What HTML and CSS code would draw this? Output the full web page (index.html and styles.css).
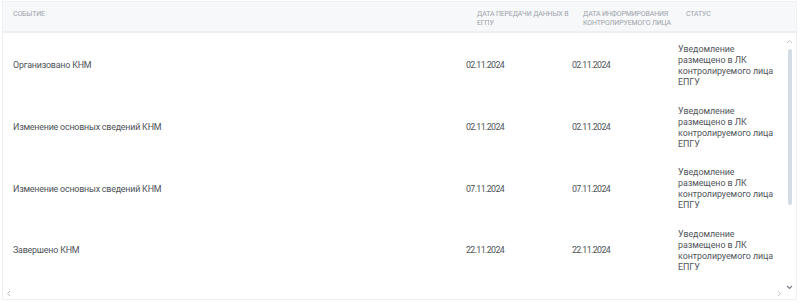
FILE: index.html
```html
<!DOCTYPE html>
<html lang="ru">
<head>
<meta charset="utf-8">
<link rel="stylesheet" href="styles.css">
</head>
<body>
<div class="table">
  <div class="head">
    <div class="hc hc1">Событие</div>
    <div class="hc hc2">Дата передачи данных в ЕГПУ</div>
    <div class="hc hc3">Дата информирования контролируемого лица</div>
    <div class="hc hc4">Статус</div>
  </div>
  <div class="body">
    <div class="rows">
      <div class="row">
        <div class="c c1">Организовано КНМ</div>
        <div class="c c2">02.11.2024</div>
        <div class="c c3">02.11.2024</div>
        <div class="c c4">Уведомление размещено в ЛК контролируемого лица ЕПГУ</div>
      </div>
      <div class="row">
        <div class="c c1">Изменение основных сведений КНМ</div>
        <div class="c c2">02.11.2024</div>
        <div class="c c3">02.11.2024</div>
        <div class="c c4">Уведомление размещено в ЛК контролируемого лица ЕПГУ</div>
      </div>
      <div class="row">
        <div class="c c1">Изменение основных сведений КНМ</div>
        <div class="c c2">07.11.2024</div>
        <div class="c c3">07.11.2024</div>
        <div class="c c4">Уведомление размещено в ЛК контролируемого лица ЕПГУ</div>
      </div>
      <div class="row">
        <div class="c c1">Завершено КНМ</div>
        <div class="c c2">22.11.2024</div>
        <div class="c c3">22.11.2024</div>
        <div class="c c4">Уведомление размещено в ЛК контролируемого лица ЕПГУ</div>
      </div>
    </div>
    <div class="vbar">
      <svg class="arr" width="7" height="5" viewBox="0 0 7 5"><path d="M1 4 L3.5 1.5 L6 4" fill="none" stroke="#c4c8ce" stroke-width="1"/></svg>
      <div class="track"><div class="thumb"></div></div>
      <svg class="arr" width="7" height="5" viewBox="0 0 7 5"><path d="M1 1 L3.5 3.5 L6 1" fill="none" stroke="#7d838b" stroke-width="1.2"/></svg>
    </div>
  </div>
  <div class="hbar">
    <svg width="5" height="7" viewBox="0 0 5 7"><path d="M4 1 L1.5 3.5 L4 6" fill="none" stroke="#b9bdc3" stroke-width="1"/></svg>
    <svg width="5" height="7" viewBox="0 0 5 7"><path d="M1 1 L3.5 3.5 L1 6" fill="none" stroke="#c4c8ce" stroke-width="1"/></svg>
  </div>
</div>
</body>
</html>
```
FILE: styles.css
```css
* { box-sizing: border-box; }
html, body { margin: 0; padding: 0; background: #ffffff; }
body {
  font-family: Roboto, "Noto Sans", sans-serif;
  width: 800px;
  height: 303px;
  overflow: hidden;
  padding: 1px 3px 0 2px;
}
.table {
  border: 1px solid #eef0f3;
  height: 299px;
  display: flex;
  flex-direction: column;
}
.head {
  display: grid;
  grid-template-columns: 466px 106px 103px 1fr;
  background: #f6f8fa;
  height: 31px;
  border-bottom: 2px solid #edf0f3;
  flex: none;
}
.hc {
  font-size: 7px;
  letter-spacing: -0.15px;
  line-height: 9px;
  text-transform: uppercase;
  color: #9ea3aa;
  padding: 8px 6px 0 8px;
}
.hc1 { padding-left: 10px; }
.hc2 { padding-right: 6px; }
.body {
  display: flex;
  flex: 1;
  min-height: 0;
}
.rows {
  flex: 1;
  display: flex;
  flex-direction: column;
  padding-top: 2px;
}
.row {
  display: grid;
  grid-template-columns: 455px 106px 106px 1fr;
  align-items: center;
  height: 61.7px;
}
.c {
  font-size: 8.9px;
  letter-spacing: -0.2px;
  line-height: 11px;
  color: #4d5257;
  padding: 0 6px 0 8px;
}
.c1 { padding-left: 10px; }
.c2, .c3 { letter-spacing: -0.65px; }
.c4 { color: #50555a; letter-spacing: -0.05px; }
.vbar {
  width: 13px;
  flex: none;
  display: flex;
  flex-direction: column;
  align-items: center;
  padding: 6px 0 2px;
}
.arr { flex: none; display: block; }
.track {
  flex: 1;
  width: 4px;
  padding: 5px 0 80px;
}
.thumb {
  width: 4px;
  height: 156px;
  background: #d3dbe5;
  border-radius: 2px;
}
.hbar {
  height: 16px;
  flex: none;
  display: flex;
  justify-content: space-between;
  align-items: center;
  padding: 4px 14px 0 3px;
}
.hbar svg { display: block; }
```
